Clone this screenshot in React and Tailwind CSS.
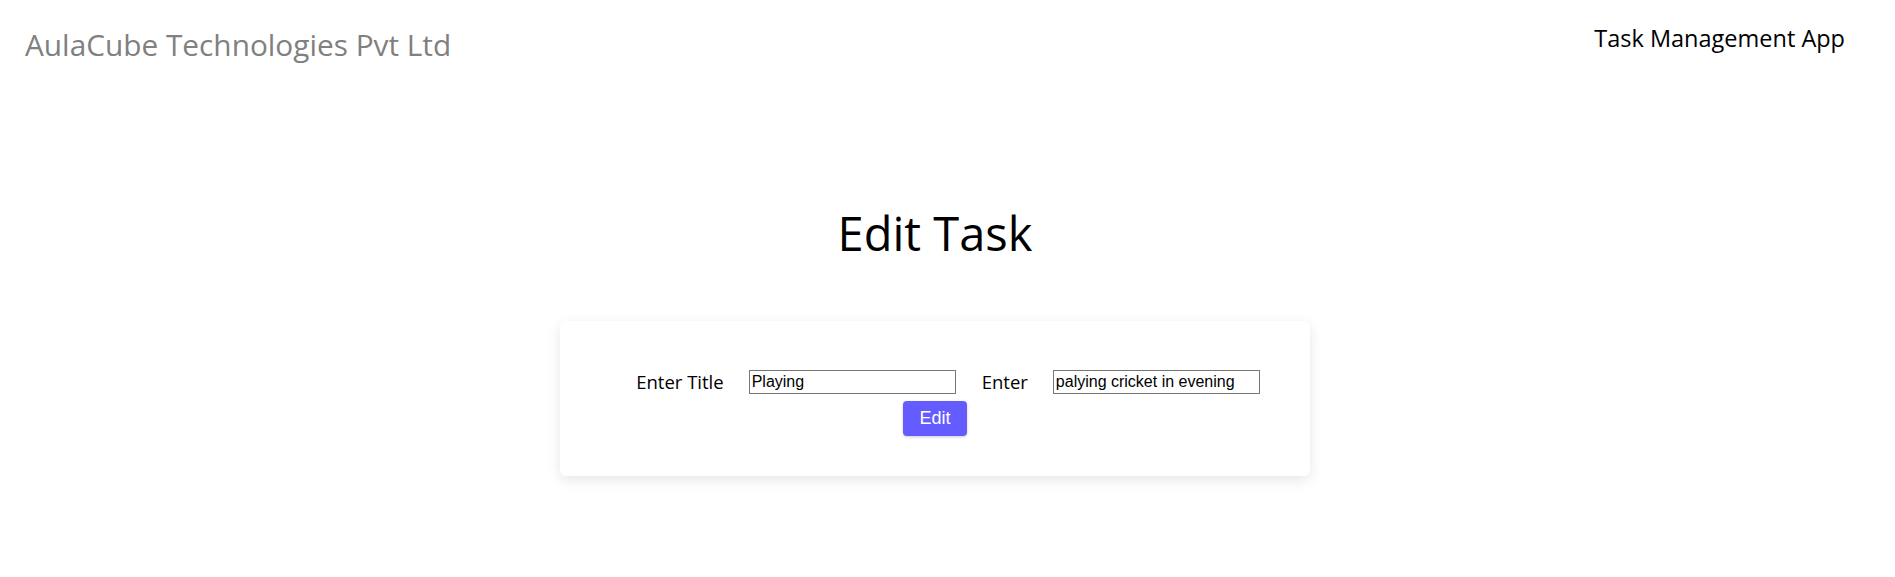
export default function App() {
  return (
    <div className="min-h-[577px] w-full bg-white" style={{ fontFamily: "'Open Sans', 'Noto Sans', sans-serif" }}>
      <header className="flex items-start justify-between pl-[25px] pr-[50px]">
        <div className="pt-[25px] text-[29.8px] leading-[40px] text-[#808080]">AulaCube Technologies Pvt Ltd</div>
        <nav className="pt-[22px] text-[23.5px] leading-[32px] text-black">Task Management App</nav>
      </header>

      <main className="flex flex-col items-center pr-[25px]">
        <h1 className="mt-[136px] text-[47px] leading-[64px] text-black">Edit Task</h1>

        <div className="mt-[56px] w-[750px] rounded-[6px] bg-white pt-[47px] pb-[40px] shadow-[0_4px_14px_rgba(0,0,0,0.10)]">
          <form className="flex flex-wrap items-center justify-center pl-[26px]">
            <label className="mr-[25px] text-[18.5px] text-black">Enter Title</label>
            <input
              type="text"
              defaultValue="Playing"
              className="mr-[26px] h-[24px] w-[207px] border border-[#767676] px-[2px] text-[16px] text-black"
              style={{ fontFamily: "'Liberation Sans', Arial, sans-serif" }}
            />
            <label className="mr-[25px] text-[18.5px] text-black">Enter</label>
            <input
              type="text"
              defaultValue="palying cricket in evening"
              className="h-[24px] w-[207px] border border-[#767676] px-[2px] text-[16px] text-black"
              style={{ fontFamily: "'Liberation Sans', Arial, sans-serif" }}
            />
          </form>
          <div className="mt-[5px] flex justify-center">
            <button
              className="h-[35px] w-[64px] rounded-[4px] bg-[#645cff] text-[18px] text-white shadow-[0_1px_3px_rgba(0,0,0,0.2)]"
              style={{ fontFamily: "'Liberation Sans', Arial, sans-serif" }}
            >
              Edit
            </button>
          </div>
        </div>
      </main>
    </div>
  );
}
